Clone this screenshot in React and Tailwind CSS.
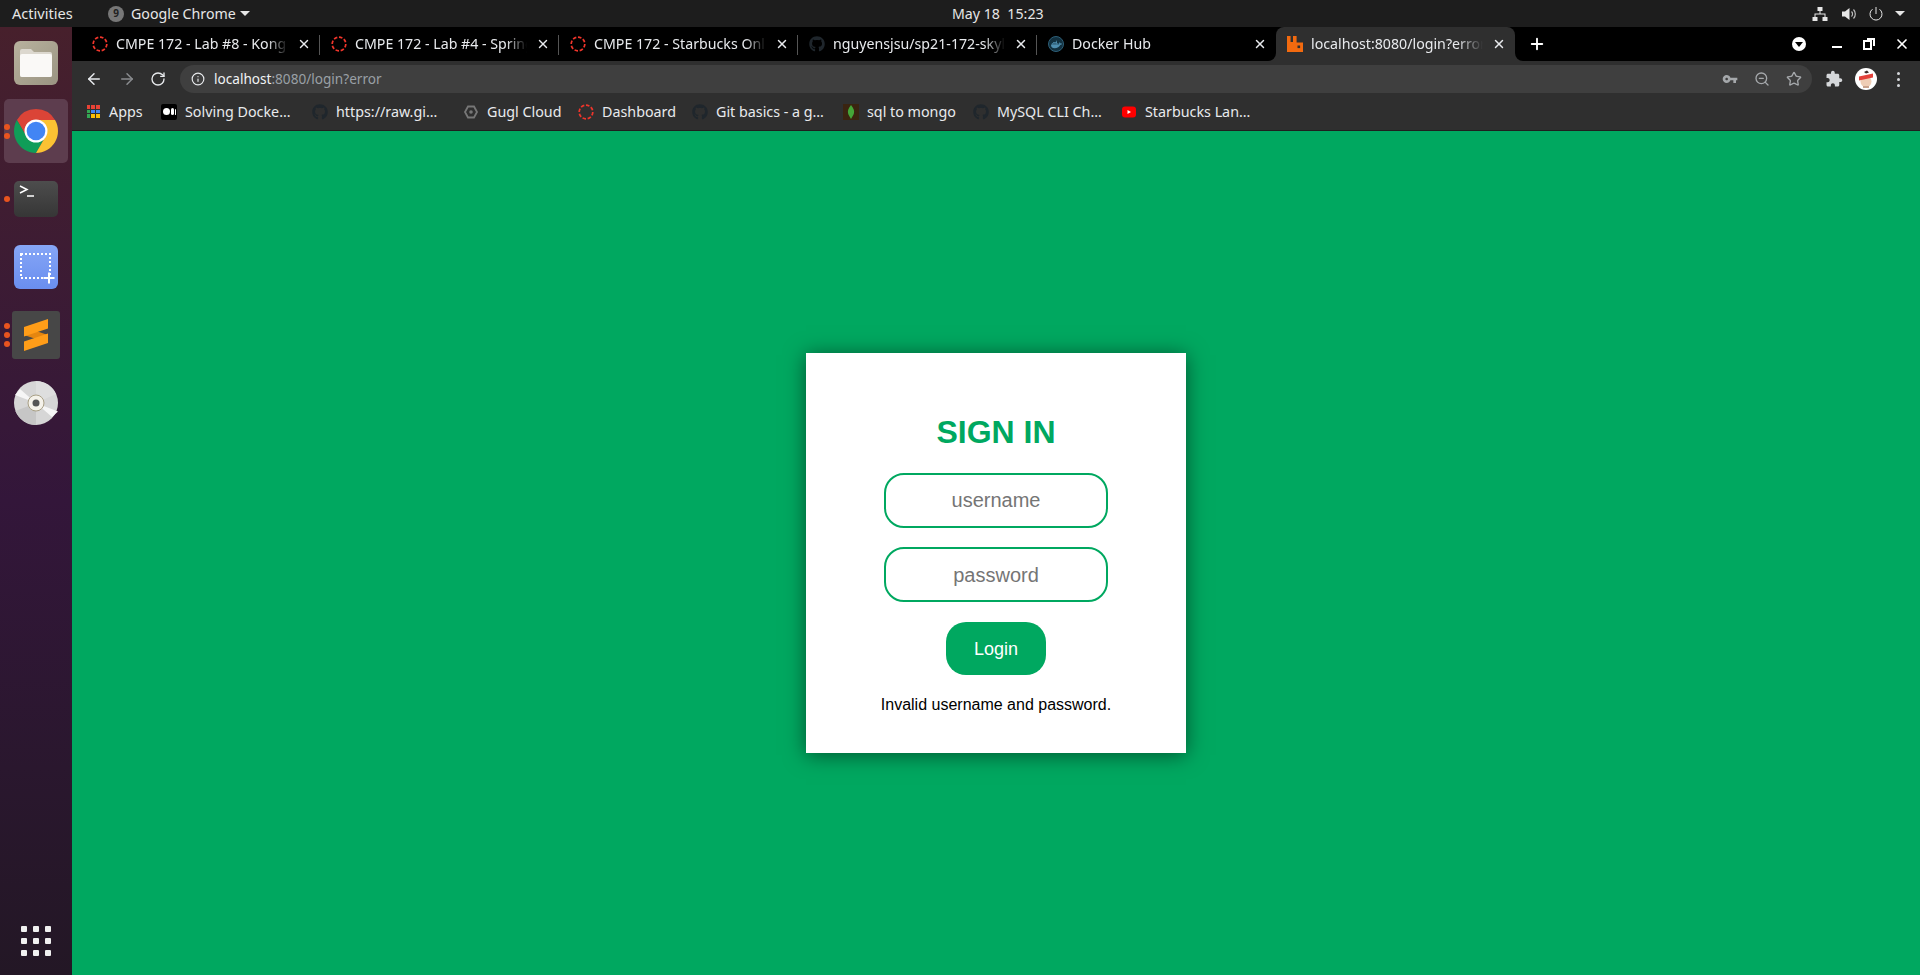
import { ArrowLeft, ArrowRight, RotateCw, Info, Star, ZoomOut, X, Plus } from 'lucide-react';
import { FaGithub, FaDocker } from 'react-icons/fa';

const uiFont = "font-['Noto_Sans',sans-serif]";

function RedRing() {
  return (
    <svg width="16" height="16" viewBox="0 0 16 16" className="shrink-0">
      <circle cx="8" cy="8" r="6.800" fill="none" stroke="#f0352b" strokeWidth="1.700" strokeDasharray="3.600 1.700" />
    </svg>
  );
}

function GithubDark() {
  return <FaGithub size={16} color="#1f262c" className="shrink-0" />;
}

function DockerIcon() {
  return (
    <span className="w-4 h-4 rounded-full bg-[#12303f] border border-[#2d5f78] flex items-center justify-center shrink-0">
      <FaDocker size={11} color="#4f8fb0" />
    </span>
  );
}

function RabbitIcon() {
  return (
    <svg width="16" height="16" viewBox="0 0 16 16" className="shrink-0">
      <path d="M0 16V0h3.600v6H6V0h3.600v6.400H16V16z" fill="#f26a0f" />
      <rect x="10.500" y="9.500" width="2.600" height="2.600" fill="#2e2e2e" />
    </svg>
  );
}

const tabs = [
  { title: 'CMPE 172 - Lab #8 - Kong API', icon: <RedRing /> },
  { title: 'CMPE 172 - Lab #4 - Spring Boot', icon: <RedRing /> },
  { title: 'CMPE 172 - Starbucks Online Store', icon: <RedRing /> },
  { title: 'nguyensjsu/sp21-172-skyline', icon: <GithubDark /> },
  { title: 'Docker Hub', icon: <DockerIcon /> },
  { title: 'localhost:8080/login?error', icon: <RabbitIcon />, active: true },
];

function AppsIcon() {
  const colors = ['#e94235', '#e94235', '#e94235', '#34a853', '#4285f4', '#4285f4', '#34a853', '#fbbc05', '#fbbc05'];
  return (
    <span className="w-4 h-4 flex items-center justify-center shrink-0">
      <span className="grid grid-cols-3 gap-[1px] w-[13px] h-[13px]">
        {colors.map((c, i) => (
          <span key={i} style={{ backgroundColor: c }} />
        ))}
      </span>
    </span>
  );
}

const bookmarks = [
  { label: 'Apps', width: 'w-[76px]', icon: <AppsIcon /> },
  {
    label: 'Solving Docke…',
    width: 'w-[151px]',
    icon: (
      <span className="w-4 h-4 bg-black rounded-[2px] flex items-center justify-center gap-[1px] shrink-0">
        <span className="w-[7px] h-[7px] rounded-full bg-white" />
        <span className="w-[3px] h-[7px] rounded-full bg-white" />
        <span className="w-[1px] h-[6px] rounded-full bg-white" />
      </span>
    ),
  },
  { label: 'https://raw.gi…', width: 'w-[151px]', icon: <GithubDark /> },
  {
    label: 'Gugl Cloud',
    width: 'w-[115px]',
    icon: (
      <svg width="16" height="16" viewBox="0 0 16 16" className="shrink-0">
        <path d="M5 2.500h6L14 8l-3 5.500H5L2 8z" fill="none" stroke="#777" strokeWidth="1.800" />
        <circle cx="8" cy="8" r="1.800" fill="#777" />
      </svg>
    ),
  },
  { label: 'Dashboard', width: 'w-[114px]', icon: <RedRing /> },
  { label: 'Git basics - a g…', width: 'w-[151px]', icon: <GithubDark /> },
  {
    label: 'sql to mongo',
    width: 'w-[130px]',
    icon: (
      <svg width="16" height="16" viewBox="0 0 16 16" className="shrink-0">
        <rect width="16" height="16" fill="#3a2410" />
        <path d="M8 1c2.500 3 3.500 5.500 3 8-.4 2-1.600 3.500-3 6-1.400-2.500-2.600-4-3-6-.5-2.500.5-5 3-8z" fill="#45a538" />
      </svg>
    ),
  },
  { label: 'MySQL CLI Ch…', width: 'w-[148px]', icon: <GithubDark /> },
  {
    label: 'Starbucks Lan…',
    width: 'w-[140px]',
    icon: (
      <svg width="16" height="16" viewBox="0 0 16 16" className="shrink-0">
        <rect x="1" y="2.500" width="14" height="11" rx="3" fill="#f00" />
        <path d="M6.500 6v4L10 8z" fill="#fff" />
      </svg>
    ),
  },
];

function TopBar() {
  return (
    <div className={`h-[27px] shrink-0 bg-[#1d1d1d] text-[#e6e6e6] flex items-center relative text-[14.2px] ${uiFont}`}>
      <span className="ml-3 w-[92px] text-[14.600px]">Activities</span>
      <span className="w-4 h-4 rounded-full bg-[#777] flex items-center justify-center text-[10px] text-[#222] font-bold ml-[4px]">9</span>
      <span className="ml-[7px] w-[104px] whitespace-nowrap">Google Chrome</span>
      <span className="ml-[5px] w-0 h-0 border-x-[5px] border-x-transparent border-t-[5px] border-t-[#e6e6e6]" />
      <span className="absolute left-[952px] top-[3px]">May 18&nbsp;&nbsp;15:23</span>
      <div className="ml-auto flex items-center pr-[15px]">
        <svg width="16" height="16" viewBox="0 0 16 16" className="mr-[13px]" fill="#e6e6e6">
          <rect x="5.500" y="1" width="5" height="4" />
          <rect x="0.500" y="11" width="5" height="4" />
          <rect x="10.500" y="11" width="5" height="4" />
          <path d="M7.500 5h1v2.500H13.500V11h-1V8.500h-9V11h-1V7.500h5z" />
        </svg>
        <svg width="16" height="16" viewBox="0 0 16 16" className="mr-[11px]">
          <path d="M1 5.500h3L8.500 2v12L4 10.500H1z" fill="#e6e6e6" />
          <path d="M10.500 5.500a3.500 3.500 0 0 1 0 5M12.500 3.500a6.500 6.500 0 0 1 0 9" fill="none" stroke="#bdbdbd" strokeWidth="1.200" />
        </svg>
        <svg width="16" height="16" viewBox="0 0 16 16" className="mr-[11px]" fill="none" stroke="#e6e6e6" strokeWidth="1">
          <path d="M8 1v7M4.500 3.200a6 6 0 1 0 7 0" />
        </svg>
        <span className="w-0 h-0 border-x-[5px] border-x-transparent border-t-[5px] border-t-[#e6e6e6]" />
      </div>
    </div>
  );
}

function ChromeLogo() {
  return (
    <svg width="44" height="44" viewBox="0 0 44 44">
      <path d="M22 0A22 22 0 0 1 41.050 11H22A11 11 0 0 0 12.470 27.500L2.950 11A22 22 0 0 1 22 0z" fill="#db4437" />
      <path d="M2.950 11A22 22 0 0 0 22 44L31.530 27.500A11 11 0 0 1 12.470 27.500z" fill="#0f9d58" />
      <path d="M41.050 11A22 22 0 0 1 22 44L31.530 27.500A11 11 0 0 0 22 11z" fill="#fbc233" />
      <circle cx="22" cy="22" r="11.500" fill="#fff" />
      <circle cx="22" cy="22" r="9.300" fill="#4285f4" />
    </svg>
  );
}

function DockDots({ count, top }) {
  return (
    <div className={`absolute left-[4px] flex flex-col gap-[3px] ${top}`}>
      {Array.from({ length: count }).map((_, i) => (
        <span key={i} className="w-[6px] h-[6px] rounded-full bg-[#e9541f]" />
      ))}
    </div>
  );
}

function Dock() {
  return (
    <aside className="w-[72px] shrink-0 flex flex-col items-center pt-[2px] pb-[19px] bg-gradient-to-b from-[#47202c] via-[#33163a] to-[#231725]">
      <div className="h-[68px] w-full flex items-center justify-center">
        <div className="w-[44px] h-[44px] rounded-[6px] bg-gradient-to-br from-[#b8b29e] to-[#9a9482] flex items-center justify-center">
          <svg width="32" height="28" viewBox="0 0 32 28">
            <path d="M2 0h9l3 3h16a2 2 0 0 1 2 2v21a2 2 0 0 1-2 2H2a2 2 0 0 1-2-2V2a2 2 0 0 1 2-2z" fill="#dcd8cf" />
            <path d="M0 7a2 2 0 0 1 2-2h28a2 2 0 0 1 2 2v19a2 2 0 0 1-2 2H2a2 2 0 0 1-2-2z" fill="#faf9f7" />
          </svg>
        </div>
      </div>
      <div className="h-[68px] w-full flex items-center justify-center relative">
        <DockDots count={2} top="top-[27px]" />
        <div className="w-16 h-16 rounded-[5px] bg-[#5d3d4e] flex items-center justify-center">
          <ChromeLogo />
        </div>
      </div>
      <div className="h-[68px] w-full flex items-center justify-center relative">
        <DockDots count={1} top="top-[31px]" />
        <div className="w-[44px] h-[36px] rounded-[5px] bg-gradient-to-b from-[#4d4d4d] to-[#363636]">
          <svg width="44" height="36" viewBox="0 0 44 36" fill="none" stroke="#fff" strokeWidth="1.500">
            <path d="M6 5l7 3.500L6 12M13 15h7" />
          </svg>
        </div>
      </div>
      <div className="h-[68px] w-full flex items-center justify-center">
        <div className="w-[44px] h-[44px] rounded-[6px] bg-gradient-to-b from-[#86a6f6] to-[#6a8eef]">
          <svg width="44" height="44" viewBox="0 0 44 44" fill="none" stroke="#fff" strokeWidth="2">
            <rect x="7" y="9" width="29" height="24" strokeDasharray="2 2" />
            <path d="M35 27.500v11M29.500 33h11" />
          </svg>
        </div>
      </div>
      <div className="h-[68px] w-full flex items-center justify-center relative">
        <DockDots count={3} top="top-[22px]" />
        <div className="w-12 h-12 rounded-[3px] bg-[#474747] flex items-center justify-center">
          <svg width="24" height="32" viewBox="0 0 24 32">
            <path d="M0 8l24 8v8L0 16z" fill="#e5860f" />
            <path d="M24 0v9.500L0 17.500V8z" fill="#ff9d18" />
            <path d="M24 14.500V24L0 32v-9.500z" fill="#ff9d18" />
          </svg>
        </div>
      </div>
      <div className="h-[68px] w-full flex items-center justify-center">
        <svg width="44" height="44" viewBox="0 0 44 44">
          <circle cx="22" cy="22" r="22" fill="#d6d6d6" />
          <path d="M22 22 22 44A22 22 0 0 1 1.500 30z" fill="#c6c6c6" />
          <path d="M22 22 22 0A22 22 0 0 1 42 13z" fill="#dedede" />
          <path d="M22 22 1 14 6 8zM22 22l22 8.500-6 5.500z" fill="#f6f6f6" />
          <circle cx="22" cy="22" r="8" fill="#f5f2ea" stroke="#a89f85" strokeWidth="1" />
          <circle cx="22" cy="22" r="3.500" fill="#555" />
        </svg>
      </div>
      <div className="mt-auto grid grid-cols-3 gap-[6px]">
        {Array.from({ length: 9 }).map((_, i) => (
          <span key={i} className="w-[6px] h-[6px] rounded-[1px] bg-[#f0f0f0]" />
        ))}
      </div>
    </aside>
  );
}

function Tab({ tab, showSeparator }) {
  if (tab.active) {
    return (
      <div className="w-[239px] h-full bg-[#2f2f2f] rounded-t-[8px] flex items-center pl-[11px] relative text-[#e8eaed]">
        {tab.icon}
        <span className="ml-[8px] w-[172px] whitespace-nowrap overflow-hidden [mask-image:linear-gradient(to_right,black_85%,transparent)]">{tab.title}</span>
        <X size={14} strokeWidth={2.500} className="ml-[9px]" />
        <span className="absolute right-[-8px] bottom-0 w-2 h-2 bg-[#2f2f2f]">
          <span className="block w-2 h-2 bg-black rounded-bl-[8px]" />
        </span>
        <span className="absolute left-[-8px] bottom-0 w-2 h-2 bg-[#2f2f2f]">
          <span className="block w-2 h-2 bg-black rounded-br-[8px]" />
        </span>
      </div>
    );
  }
  return (
    <div className="w-[239px] h-full flex items-center pl-[11px] text-[#e8eaed] relative">
      {tab.icon}
      <span className="ml-[8px] w-[172px] whitespace-nowrap overflow-hidden [mask-image:linear-gradient(to_right,black_88%,transparent)]">{tab.title}</span>
      <X size={14} strokeWidth={2.500} className="ml-[9px]" />
      {showSeparator && <span className="absolute right-0 top-[8px] h-[20px] w-px bg-[#555]" />}
    </div>
  );
}

function TabStrip() {
  return (
    <div className={`h-[34px] shrink-0 bg-black flex items-center pl-[9px] text-[14.2px] ${uiFont}`}>
      {tabs.map((tab, i) => (
        <Tab key={tab.title} tab={tab} showSeparator={i < 4} />
      ))}
      <Plus size={18} color="#fff" strokeWidth={2.500} className="ml-[13px]" />
      <div className="ml-auto flex items-center">
        <span className="w-[14px] h-[14px] rounded-full bg-white flex items-center justify-center">
          <span className="w-0 h-0 border-x-[4px] border-x-transparent border-t-[5px] border-t-black" />
        </span>
        <span className="ml-[26px] mt-[6px] w-[10px] h-[2px] bg-white" />
        <svg width="12" height="12" viewBox="0 0 12 12" className="ml-[21px]" fill="none" stroke="#fff" strokeWidth="2">
          <rect x="1" y="3" width="7" height="8" />
          <path d="M4 1h7v7" />
        </svg>
        <X size={16} color="#fff" strokeWidth={2.500} className="ml-[19px] mr-[10px]" />
      </div>
    </div>
  );
}

function Toolbar() {
  return (
    <div className={`h-[32px] shrink-0 bg-[#2f2f2f] flex items-end text-[13.600px] ${uiFont}`}>
      <div className="h-[28px] w-full flex items-center">
        <ArrowLeft size={18} color="#e8eaed" strokeWidth={2} className="ml-[13px]" />
        <ArrowRight size={18} color="#8a8c8f" strokeWidth={2} className="ml-[15px]" />
        <RotateCw size={16} color="#e8eaed" strokeWidth={2} className="ml-[14px]" />
        <div className="ml-[14px] w-[1632px] h-[28px] rounded-full bg-[#3f3f3f] flex items-center pl-[11px] pr-[10px]">
          <Info size={14} color="#e8eaed" />
          <span className="ml-[9px] text-[#f1f3f4]">localhost</span>
          <span className="text-[#9aa0a6]">:8080/login?error</span>
          <div className="ml-auto flex items-center gap-[16px]">
            <svg width="16" height="16" viewBox="0 0 24 24" fill="#a5a8ab">
              <path d="M12.650 10C11.830 7.670 9.610 6 7 6c-3.310 0-6 2.690-6 6s2.690 6 6 6c2.610 0 4.830-1.670 5.650-4H17v4h4v-4h2v-4H12.650zM7 14c-1.100 0-2-.9-2-2s.9-2 2-2 2 .9 2 2-.9 2-2 2z" />
            </svg>
            <ZoomOut size={16} color="#a5a8ab" />
            <Star size={16} color="#a5a8ab" />
          </div>
        </div>
        <svg width="18" height="18" viewBox="0 0 24 24" fill="#d5d7da" className="ml-[13px]">
          <path d="M20.500 11H19V7c0-1.100-.9-2-2-2h-4V3.500C13 2.120 11.880 1 10.500 1S8 2.120 8 3.500V5H4c-1.100 0-1.990.9-1.990 2v3.800H3.500c1.490 0 2.700 1.210 2.700 2.700s-1.210 2.700-2.700 2.700H2V20c0 1.100.9 2 2 2h3.800v-1.500c0-1.490 1.210-2.700 2.700-2.700 1.490 0 2.700 1.210 2.700 2.700V22H17c1.100 0 2-.9 2-2v-4h1.500c1.380 0 2.500-1.120 2.500-2.500S21.880 11 20.500 11z" />
        </svg>
        <span className="ml-[12px] w-[22px] h-[22px] rounded-full bg-white flex items-center justify-center overflow-hidden">
          <svg width="20" height="20" viewBox="0 0 20 20">
            <circle cx="10" cy="12.500" r="5.500" fill="#efcdb5" />
            <path d="M3 7.500l14-3v4l-14 3z" fill="#e2403a" />
            <path d="M8 3l3-1.500 2 2-3 1z" fill="#3a2a28" />
            <path d="M7 17h6v2H7z" fill="#c9a28c" />
          </svg>
        </span>
        <span className="ml-[20px] flex flex-col gap-[3px]">
          <span className="w-[3px] h-[3px] rounded-full bg-[#d5d7da]" />
          <span className="w-[3px] h-[3px] rounded-full bg-[#d5d7da]" />
          <span className="w-[3px] h-[3px] rounded-full bg-[#d5d7da]" />
        </span>
      </div>
    </div>
  );
}

function BookmarksBar() {
  return (
    <div className={`h-[38px] shrink-0 bg-[#2f2f2f] border-b border-[#1f1f1f] flex items-center pl-[13px] text-[14.300px] text-[#e8eaed] ${uiFont}`}>
      {bookmarks.map((b) => (
        <div key={b.label} className={`${b.width} flex items-center gap-2 shrink-0 whitespace-nowrap`}>
          {b.icon}
          <span>{b.label}</span>
        </div>
      ))}
    </div>
  );
}

function LoginCard() {
  return (
    <main className="flex-1 bg-[#00a860] flex items-center justify-center font-['Liberation_Sans',sans-serif]">
      <div className="w-[380px] h-[400px] bg-white shadow-[0_2px_20px_rgba(0,0,0,0.5)] flex flex-col items-center pt-[61px]">
        <h1 className="text-[32px] leading-[37px] font-bold text-[#00a860]">SIGN IN</h1>
        <input
          type="text"
          placeholder="username"
          className="mt-[22px] w-[224px] h-[55px] rounded-[20px] border-2 border-[#00a860] text-center text-[20px] placeholder:text-[#757575] outline-none"
        />
        <input
          type="password"
          placeholder="password"
          className="mt-[19px] w-[224px] h-[55px] pt-px rounded-[20px] border-2 border-[#00a860] text-center text-[20px] placeholder:text-[#757575] outline-none"
        />
        <button className="mt-[20px] w-[100px] h-[53px] pt-px rounded-[20px] bg-[#00a860] text-white text-[18px]">Login</button>
        <p className="mt-[21px] text-base leading-[18px] text-black">Invalid username and password.</p>
      </div>
    </main>
  );
}

export default function App() {
  return (
    <div className="h-screen flex flex-col overflow-hidden">
      <TopBar />
      <div className="flex-1 flex min-h-0">
        <Dock />
        <div className="flex-1 flex flex-col min-w-0">
          <TabStrip />
          <Toolbar />
          <BookmarksBar />
          <LoginCard />
        </div>
      </div>
    </div>
  );
}
